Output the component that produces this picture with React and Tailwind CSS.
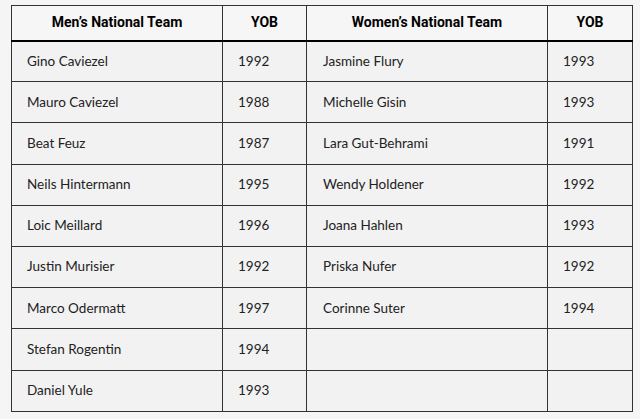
const men = [
  ["Gino Caviezel", "1992"],
  ["Mauro Caviezel", "1988"],
  ["Beat Feuz", "1987"],
  ["Neils Hintermann", "1995"],
  ["Loic Meillard", "1996"],
  ["Justin Murisier", "1992"],
  ["Marco Odermatt", "1997"],
  ["Stefan Rogentin", "1994"],
  ["Daniel Yule", "1993"],
];

const women = [
  ["Jasmine Flury", "1993"],
  ["Michelle Gisin", "1993"],
  ["Lara Gut-Behrami", "1991"],
  ["Wendy Holdener", "1992"],
  ["Joana Hahlen", "1993"],
  ["Priska Nufer", "1992"],
  ["Corinne Suter", "1994"],
];

const App = () => {
  const rows = men.map((m, i) => [m, women[i] || ["", ""]]);

  return (
    <div className="min-h-[419px] bg-[#f5f5f5] pt-[5px] pl-[11px]">
      <table className="table-fixed border-collapse w-[621px] border border-[#333] font-['Lato',sans-serif] text-[13.5px] text-[#222]">
        <colgroup>
          <col className="w-[211px]" />
          <col className="w-[84px]" />
          <col className="w-[241px]" />
          <col className="w-[85px]" />
        </colgroup>
        <thead>
          <tr className="h-[35px] bg-[#f6f6f6]">
            {["Men’s National Team", "YOB", "Women’s National Team", "YOB"].map((h, i) => (
              <th
                key={i}
                className="border border-[#333] border-b-2 border-b-black text-center font-bold font-['Roboto',sans-serif] text-[14px] text-black pb-[1px]"
              >
                {h}
              </th>
            ))}
          </tr>
        </thead>
        <tbody>
          {rows.map(([m, w], i) => (
            <tr key={i} className="h-[41.2px] bg-[#f2f2f2]">
              <td className="border border-[#333] pl-[15px] pb-[1px]">{m[0]}</td>
              <td className="border border-[#333] pl-[15px] pb-[1px]">{m[1]}</td>
              <td className="border border-[#333] pl-[16px] pb-[1px]">{w[0]}</td>
              <td className="border border-[#333] pl-[15px] pb-[1px]">{w[1]}</td>
            </tr>
          ))}
        </tbody>
      </table>
    </div>
  );
};

export default App;
